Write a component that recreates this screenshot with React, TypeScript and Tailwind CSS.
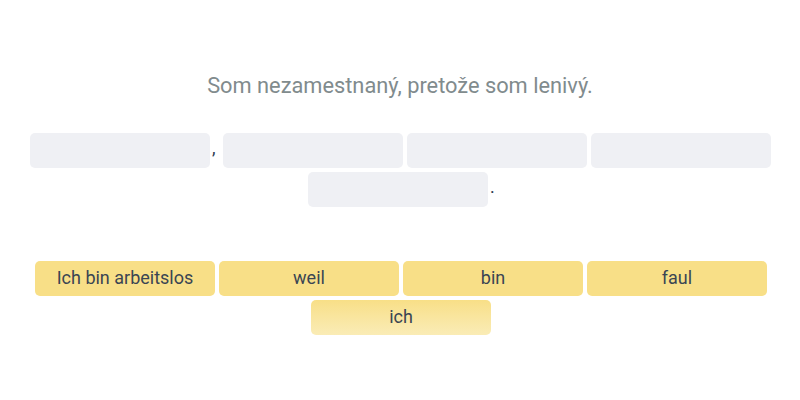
const blanks = [',', '', '', '', '.'];
const words = ['Ich bin arbeitslos', 'weil', 'bin', 'faul', 'ich'];

const App = () => {
  return (
    <div className="w-[800px] h-[400px] bg-white flex flex-col items-center pt-[72px] font-['Roboto',sans-serif]">
      <h1 className="text-[21.8px] leading-7 text-[#818b8d]">Som nezamestnaný, pretože som lenivý.</h1>
      <div className="mt-[31px] w-full flex flex-wrap justify-center pl-px">
        {blanks.map((p, i) => (
          <div key={i} className="flex">
            <div className="w-[180px] h-[35px] m-0.5 rounded-[5px] bg-[#eff0f4]" />
            {p === ',' && <span className="w-[9px] mt-[8px] text-lg leading-[18px] text-[#2d3b4e]">,</span>}
            {p === '.' && <span className="w-[5px] mt-[8px] text-lg leading-[18px] text-[#2d3b4e]">.</span>}
          </div>
        ))}
      </div>
      <div className="mt-[50px] w-full flex flex-wrap justify-center pl-[2px]">
        {words.map((w, i) => (
          <button
            key={i}
            className={
              i === words.length - 1
                ? 'w-[180px] h-[35px] m-0.5 pb-[2px] rounded-[5px] bg-gradient-to-b from-[#f8df87] to-[#faecb6] text-lg text-[#3a4553]'
                : 'w-[180px] h-[35px] m-0.5 pb-[2px] rounded-[5px] bg-[#f8df87] text-lg text-[#3a4553]'
            }
          >
            {w}
          </button>
        ))}
      </div>
    </div>
  );
};

export default App;
